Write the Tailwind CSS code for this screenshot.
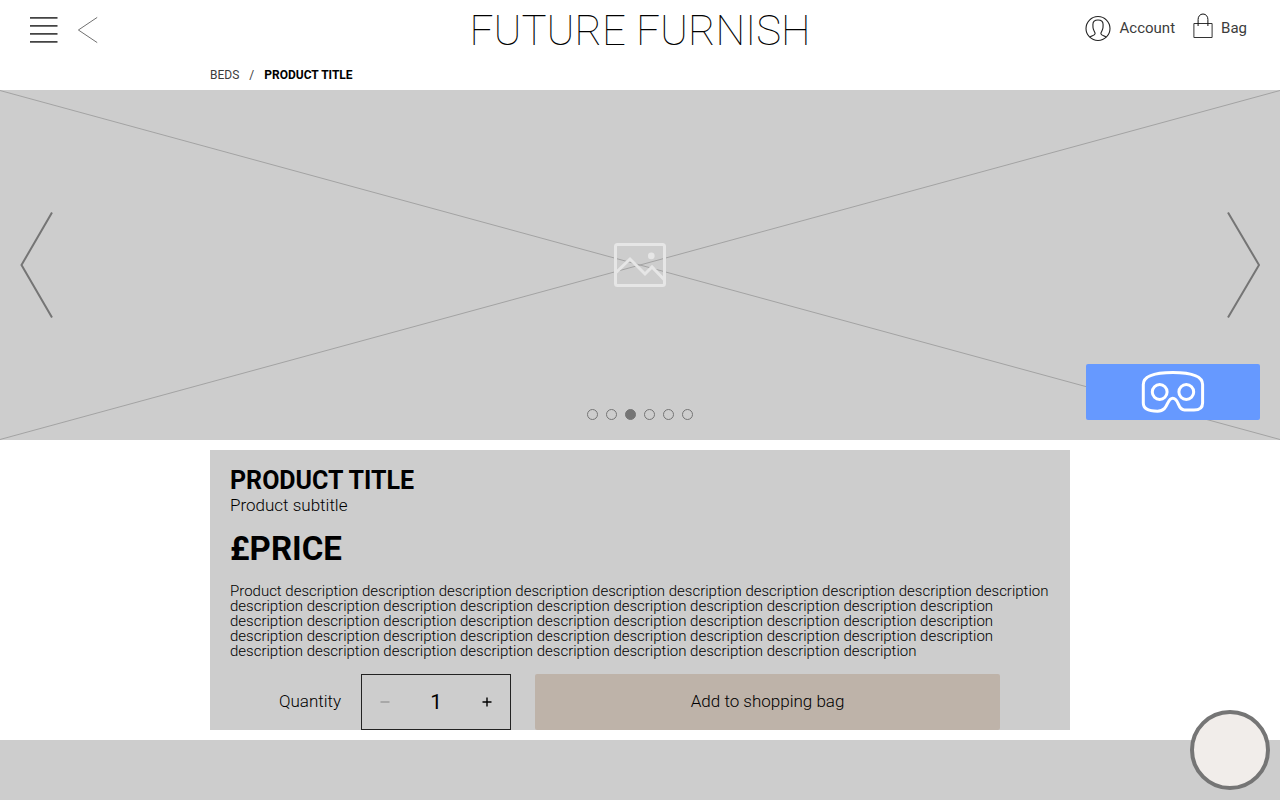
<!DOCTYPE html>
<html lang="en">
<head>
<meta charset="utf-8">
<meta name="viewport" content="width=device-width, initial-scale=1">
<title>Future Furnish</title>
<script src="https://cdn.jsdelivr.net/npm/@tailwindcss/browser@4"></script>
</head>
<body class="flex min-h-screen flex-col bg-white font-['Roboto',sans-serif] text-black">
<header class="grid h-[60px] grid-cols-[1fr_auto_1fr] items-center px-[30px]">
  <nav class="flex items-center gap-5" aria-label="Main">
    <button type="button" aria-label="Menu">
      <svg class="block" width="28" height="28" viewBox="0 0 28 28" stroke="#444" stroke-width="1.6"><path d="M0 1.9H27.5M0 9.9H27.5M0 17.9H27.5M0 25.9H27.5"/></svg>
    </button>
    <a href="#" aria-label="Back">
      <svg class="block" width="20" height="28" viewBox="0 0 20 28" fill="none" stroke="#707070" stroke-width="1"><path d="M19.2 1.4L.4 14L19.2 26.6"/></svg>
    </a>
  </nav>
  <a href="#" class="pt-0.5 text-[42px] leading-[58px] font-thin">FUTURE FURNISH</a>
  <nav class="flex items-center justify-end gap-[18px] pr-[3px] pb-[3px] text-[15px] text-[#3c3c3c]" aria-label="Shop">
    <a href="#" class="flex items-center gap-2">
      <svg class="block" width="27" height="27" viewBox="0 0 27 27" fill="none" stroke="#222" stroke-width="1.1"><circle cx="13" cy="13.5" r="12"/><path d="M4.9 22.2C5.9 20.7 10 20.6 10.1 18.8C10.2 17 8.1 15.4 8 12.6L7.9 9.5C7.9 6.6 10 5 13 5S18.1 6.6 18.1 9.5L18 12.6C17.9 15.4 15.8 17 15.9 18.8C16 20.6 20.1 20.7 21.1 22.2"/></svg>
      Account
    </a>
    <a href="#" class="flex items-center gap-2">
      <svg class="mb-1 block" width="20" height="27" viewBox="0 0 20 27" fill="none" stroke="#333" stroke-width="1"><path d="M.9 10.5H19.1V24.5H.9Z"/><path stroke="#111" d="M5.1 13V6.4C5.1 3.5 7 1 10 1S14.9 3.5 14.9 6.4V13"/></svg>
      Bag
    </a>
  </nav>
</header>
<nav class="mx-auto flex h-[30px] w-full max-w-[860px] items-center gap-2.5 text-[12px] text-[#3c3c3c]" aria-label="Breadcrumb">
  <a href="#">BEDS</a><span>/</span><a href="#" class="font-bold text-black" aria-current="page">PRODUCT TITLE</a>
</nav>
<section class="relative flex h-[350px] items-center justify-between bg-[#cdcdcd] px-5" aria-label="Product pictures">
  <svg class="absolute inset-0 h-full w-full" viewBox="0 0 1280 350" preserveAspectRatio="none" stroke="#a3a3a3" stroke-width="1"><path d="M0 .5L1280 349.5M0 349.5L1280 .5"/></svg>
  <button type="button" class="relative" aria-label="Previous picture">
    <svg class="block" width="34" height="108" viewBox="0 0 34 108" fill="none" stroke="#757575" stroke-width="2"><path d="M32 1.5L1.5 54L32 106.5"/></svg>
  </button>
  <svg class="relative" width="52" height="44" viewBox="0 0 52 44" fill="none" stroke="#e6e6e6" stroke-width="3"><rect x="1.5" y="1.5" width="49" height="41" rx="2"/><path d="M1.5 30L16 16L31 31L38 24L50.5 37"/><circle cx="37.3" cy="12.9" r="3.3" fill="#e6e6e6" stroke="none"/></svg>
  <button type="button" class="relative" aria-label="Next picture">
    <svg class="block" width="34" height="108" viewBox="0 0 34 108" fill="none" stroke="#757575" stroke-width="2"><path d="M2 1.5L33 54L2 106.5"/></svg>
  </button>
  <div class="absolute inset-x-0 bottom-5 flex justify-center gap-2">
    <button type="button" aria-label="Picture 1" class="size-[11px] rounded-full border border-[#757575]"></button>
    <button type="button" aria-label="Picture 2" class="size-[11px] rounded-full border border-[#757575]"></button>
    <button type="button" aria-label="Picture 3" aria-current="true" class="size-[11px] rounded-full border border-[#757575] bg-[#757575]"></button>
    <button type="button" aria-label="Picture 4" class="size-[11px] rounded-full border border-[#757575]"></button>
    <button type="button" aria-label="Picture 5" class="size-[11px] rounded-full border border-[#757575]"></button>
    <button type="button" aria-label="Picture 6" class="size-[11px] rounded-full border border-[#757575]"></button>
  </div>
  <button type="button" aria-label="View in VR" class="absolute right-5 bottom-5 flex h-14 w-[174px] items-center justify-center rounded-xs bg-[#6699ff]">
    <svg width="64" height="44" viewBox="0 0 64 44" fill="none" stroke="#fff" stroke-width="3"><path d="M2.3 14.5C2.3 8 9 2.5 31.8 2.5S61.6 8 61.6 14.5V33C61.6 38 58 40 53 40H43.5C36 40 38.5 28.3 31.8 28.3S28 41.2 16.5 41.2C7 41.2 2.3 38.5 2.3 33Z"/><circle cx="18.7" cy="22" r="7.4"/><circle cx="45.3" cy="22" r="7.4"/></svg>
  </button>
</section>
<main class="mx-auto my-2.5 w-full max-w-[860px] bg-[#cdcdcd] px-5 pt-[15px]">
  <h1 class="text-[25px] leading-8 font-bold">PRODUCT TITLE</h1>
  <p class="text-[17px] leading-4 font-light">Product subtitle</p>
  <p class="mt-4 text-[33px] leading-10 font-bold">£PRICE</p>
  <p class="mt-[15px] text-[15px] leading-[15px] font-light">
    Product
    description description description description description
    description description description description description
    description description description description description
    description description description description description
    description description description description description
    description description description description description
    description description description description description
    description description description description description
    description description description description description
    description description description description
  </p>
  <form class="mt-[15px] flex items-center pr-[50px] pl-[49px]">
    <label for="qty" class="text-[17px] font-light">Quantity</label>
    <div class="ml-5 flex h-14 w-[150px] items-center justify-between border border-[#222] px-[18px]">
      <button type="button" aria-label="Decrease quantity"><svg class="block" width="10" height="10" viewBox="0 0 10 10" stroke="#999" stroke-width="1.4"><path d="M.5 5H9.5"/></svg></button>
      <input id="qty" type="text" inputmode="numeric" value="1" class="h-8 w-10 bg-transparent text-center text-[21px] outline-none">
      <button type="button" aria-label="Increase quantity"><svg class="block" width="10" height="10" viewBox="0 0 10 10" stroke="#000" stroke-width="1.4"><path d="M.5 5H9.5M5 .5V9.5"/></svg></button>
    </div>
    <button type="submit" class="ml-6 h-14 flex-1 rounded-xs bg-[#beb3a9] text-[17px] font-light">Add to shopping bag</button>
  </form>
</main>
<section class="min-h-[60px] flex-1 bg-[#cdcdcd]" aria-label="More"></section>
<button type="button" aria-label="Help" class="fixed right-2.5 bottom-2.5 size-20 rounded-full border-4 border-[#757575] bg-[#f1edea]"></button>
</body>
</html>
